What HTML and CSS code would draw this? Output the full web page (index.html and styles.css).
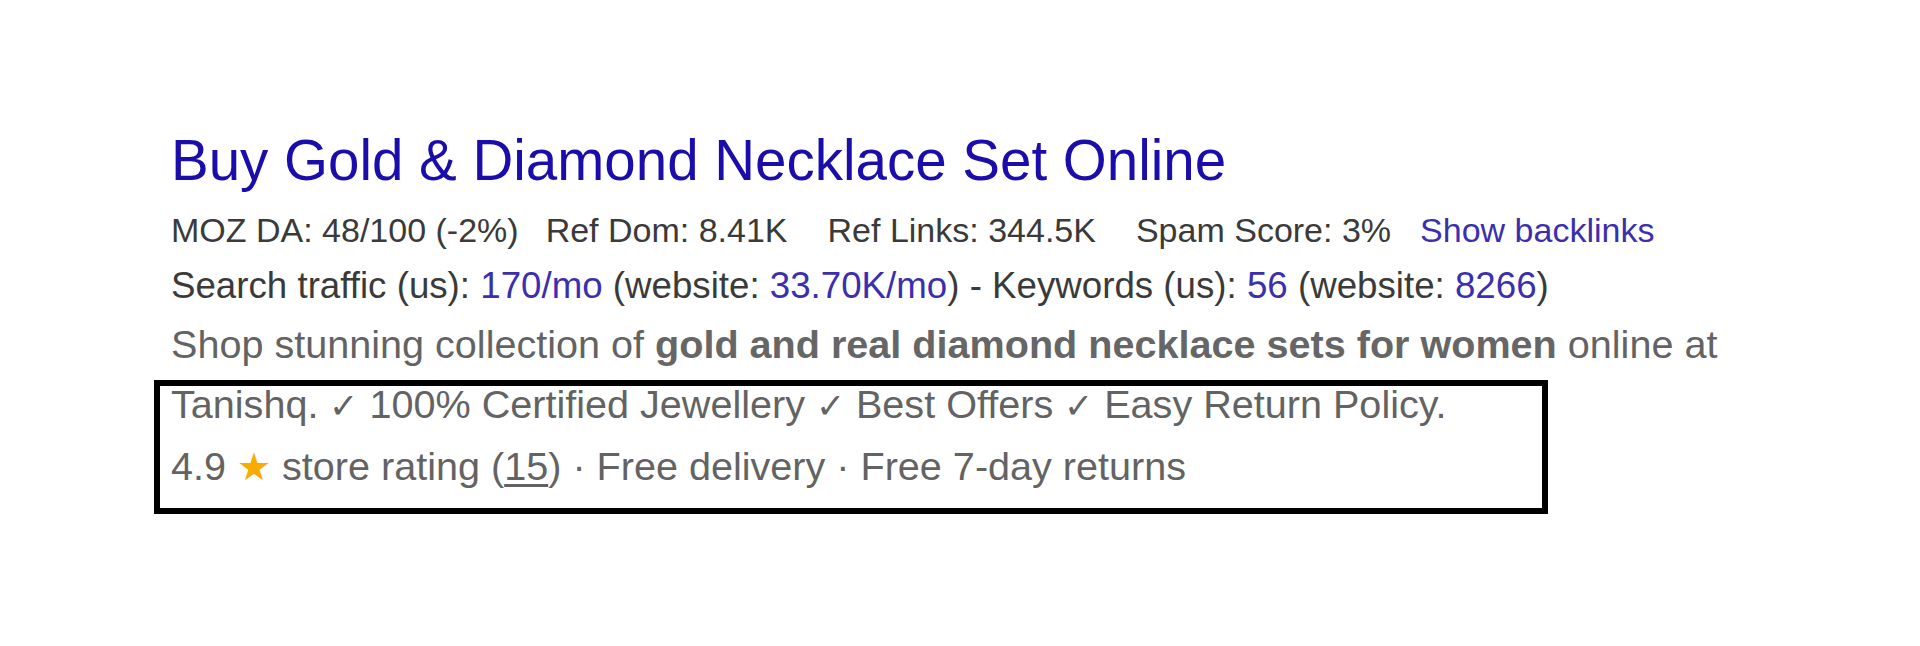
FILE: index.html
```html
<!DOCTYPE html>
<html lang="en">
<head>
<meta charset="utf-8">
<title>Search result</title>
<link rel="stylesheet" href="styles.css">
</head>
<body>
<div class="result">
  <a class="title" href="#">Buy Gold &amp; Diamond Necklace Set Online</a>
  <div class="moz">
    <span class="metric metric-narrow">MOZ DA: 48/100 (-2%)</span>
    <span class="metric metric-wide">Ref Dom: 8.41K</span>
    <span class="metric metric-wide">Ref Links: 344.5K</span>
    <span class="metric">Spam Score: 3%</span>
    <a class="link" href="#">Show backlinks</a>
  </div>
  <div class="traffic">Search traffic (us): <span class="num">170/mo</span> (website: <span class="num">33.70K/mo</span>) - Keywords (us): <span class="num">56</span> (website: <span class="num">8266</span>)</div>
  <div class="desc">
    <div class="line">Shop stunning collection of <b>gold and real diamond necklace sets for women</b> online at</div>
    <div class="line">Tanishq. <span class="check">✓</span> 100% Certified Jewellery <span class="check">✓</span> Best Offers <span class="check">✓</span> Easy Return Policy.</div>
    <div class="line">4.9 <span class="star">★</span> store rating (<u>15</u>) · Free delivery · Free 7-day returns</div>
    <div class="highlight"></div>
  </div>
</div>
</body>
</html>
```

FILE: styles.css
```css
html, body {
  margin: 0;
  padding: 0;
  background: #ffffff;
}

body {
  width: 1920px;
  height: 646px;
  overflow: hidden;
  font-family: "Liberation Sans", Arial, sans-serif;
}

.result {
  padding: 129px 0 0 171px;
  display: flex;
  flex-direction: column;
  align-items: flex-start;
}

.title {
  font-size: 56.5px;
  line-height: 64px;
  color: #1a0dab;
  text-decoration: none;
  margin-bottom: 10px;
}

.moz {
  display: flex;
  font-size: 34px;
  line-height: 55px;
  color: #3a3a3a;
  white-space: nowrap;
}

.metric {
  margin-right: 29px;
}

.metric-narrow {
  margin-right: 27px;
}

.metric-wide {
  margin-right: 40px;
}

.link {
  color: #3b2fb0;
  text-decoration: none;
}

.traffic {
  font-size: 36.7px;
  line-height: 56px;
  color: #3a3a3a;
  white-space: nowrap;
}

.num {
  color: #3b2fb0;
}

.desc {
  position: relative;
  font-size: 39.6px;
  line-height: 60px;
  color: #636363;
  white-space: nowrap;
}

.desc b {
  font-weight: bold;
  color: #666666;
}

.check {
  font-size: 35px;
}

.star {
  color: #f9ab00;
  font-size: 38px;
}

.desc u {
  text-underline-offset: 4px;
}

.highlight {
  position: absolute;
  left: -17px;
  top: 66px;
  width: 1394px;
  height: 134px;
  box-sizing: border-box;
  border: 6px solid #000000;
}
```
